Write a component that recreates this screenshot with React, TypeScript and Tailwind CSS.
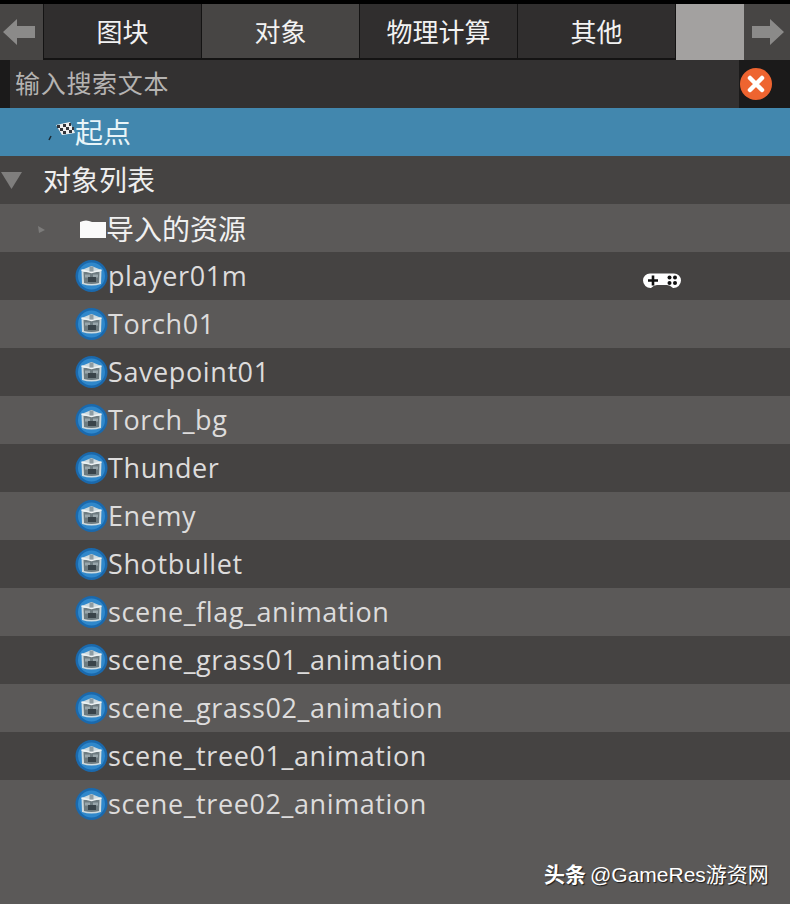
const CJK = "font-['Open_Sans','Noto_Sans_CJK_SC',sans-serif]";

const objects = [
  "player01m",
  "Torch01",
  "Savepoint01",
  "Torch_bg",
  "Thunder",
  "Enemy",
  "Shotbullet",
  "scene_flag_animation",
  "scene_grass01_animation",
  "scene_grass02_animation",
  "scene_tree01_animation",
  "scene_tree02_animation",
];

function Arrow({ flip }: { flip?: boolean }) {
  return (
    <svg width="32" height="28" viewBox="0 0 32 28" className={flip ? "rotate-180" : ""}>
      <path d="M0 14 L14 1 L14 8 L32 8 L32 20 L14 20 L14 27 Z" fill="#8b8a89" />
    </svg>
  );
}

function PackageIcon() {
  return (
    <svg width="33" height="34" viewBox="0 0 33 34" className="shrink-0">
      <circle cx="16.5" cy="17" r="16" fill="#1a69ad" />
      <circle cx="16.5" cy="17" r="13.5" fill="#3088cb" />
      <path d="M6.5 11 L16.5 7 L26.5 11 L26 25 Q16.5 28 7 25 Z" fill="#cfdbdf" />
      <path d="M8.5 13 L24.5 13 L24 24 Q16.5 26 9 24 Z" fill="#6d7b80" />
      <path d="M6.5 11 L16.5 13.5 L26.5 11" fill="none" stroke="#eef3f4" strokeWidth="1.4" />
      <path d="M10 15.5h5v3h-5z M18 15.5h5v3h-5z" fill="#98a6ab" />
      <rect x="13" y="18" width="8" height="5" fill="#39444a" />
      <rect x="14.5" y="7.5" width="4" height="5" fill="#8e9ca2" />
    </svg>
  );
}

function Tab({ label, active }: { label: string; active?: boolean }) {
  return (
    <div
      className={`flex h-[54px] w-[157px] items-center justify-center pt-0.5 text-[26px] text-[#f2f2f2] ${
        active ? "bg-[#474544]" : "bg-[#302e2e]"
      }`}
    >
      {label}
    </div>
  );
}

export default function App() {
  return (
    <div className={`relative flex h-[904px] w-[790px] flex-col overflow-hidden bg-[#5b5958] ${CJK}`}>
      <div className="h-1 bg-black" />

      {/* tabs */}
      <div className="flex h-[56px] bg-[#141313]">
        <div className="flex w-[43px] items-center justify-center bg-[#474544] pr-1.5">
          <Arrow />
        </div>
        <div className="ml-px flex gap-px">
          <Tab label="图块" />
          <Tab label="对象" active />
          <Tab label="物理计算" />
          <Tab label="其他" />
        </div>
        <div className="ml-px w-[68px] bg-[#a3a1a0]" />
        <div className="flex flex-1 items-center justify-center bg-[#474544] pl-[2px]">
          <Arrow flip />
        </div>
      </div>

      {/* search */}
      <div className="flex h-12 bg-[#1b1a1a]">
        <div className="ml-[10px] flex w-[729px] items-center bg-[#333131] pl-[5px] text-[25px] tracking-[0.7px] text-[#b5b3b1]">
          输入搜索文本
        </div>
        <div className="flex flex-1 items-center pl-px">
          <div className="flex h-8 w-8 items-center justify-center rounded-full bg-[#ee6430]">
            <svg width="18" height="18" viewBox="0 0 18 18">
              <path d="M3 3 L15 15 M15 3 L3 15" stroke="#fff" strokeWidth="4.5" strokeLinecap="round" />
            </svg>
          </div>
        </div>
      </div>

      {/* start point */}
      <div className="flex h-12 items-center bg-[#4287ae] pl-[48px] text-[28px] text-[#e8f4f8]">
        <svg width="27" height="24" viewBox="0 0 27 24" className="shrink-0">
          <path d="M1 20 L3 16" stroke="#1c2a33" strokeWidth="1.5" />
          <path d="M8 5 L22 2 L27 13 L14 15 Z" fill="#eeeeee" />
          <path d="M9 5h3v3h-3z M15 4h3v3h-3z M21 3h2v3h-2z M12 8h3v3h-3z M18 7h3v3h-3z M24 7h2v3h-2z M15 11h3v3h-3z M21 10h3v3h-3z" fill="#33343a" />
        </svg>
        起点
      </div>

      {/* group header */}
      <div className="flex h-12 items-center bg-[#454342] text-[28px] text-[#eeeeee]">
        <svg width="22" height="18" viewBox="0 0 22 18" className="ml-px shrink-0">
          <path d="M0 1 L21 1 L10.5 18 Z" fill="#7f7e7d" />
        </svg>
        <span className="ml-5">对象列表</span>
      </div>

      {/* imported folder */}
      <div className="flex h-12 items-center bg-[#5b5958] pt-0.5 text-[28px] text-[#f0f0f0]">
        <svg width="7" height="7" viewBox="0 0 7 7" className="ml-[38px] shrink-0">
          <path d="M0 0 L7 4 L1 7 Z" fill="#7c7b7a" />
        </svg>
        <svg width="26" height="20" viewBox="0 0 26 20" className="ml-[35px] shrink-0">
          <path d="M0 3 Q6 0 12 3 L26 3 L26 19 L0 19 Z" fill="#fafafa" />
        </svg>
        <span>导入的资源</span>
      </div>

      {/* object rows */}
      {objects.map((name, i) => (
        <div
          key={name}
          className={`flex h-12 shrink-0 items-center pl-[75px] text-[27px] tracking-[0.6px] text-[#dddcdc] ${
            i % 2 === 0 ? "bg-[#454342]" : "bg-[#5b5958]"
          }`}
        >
          <PackageIcon />
          <span>{name}</span>
          {i === 0 && (
            <svg width="38" height="16" viewBox="0 0 38 16" className="ml-auto mr-[109px] mt-[9px] shrink-0">
              <path d="M7 0.5 H31 A7 7 0 0 1 38 7.5 A7.5 7.5 0 0 1 30 15 Q27 12 24 12 H14 Q11 12 8 15 A7.5 7.5 0 0 1 0 7.5 A7 7 0 0 1 7 0.5 Z" fill="#fff" />
              <path d="M5 7.5h10 M10 2.5v10" stroke="#111" strokeWidth="2.6" />
              <circle cx="26.5" cy="4.5" r="2" fill="#111" />
              <circle cx="32" cy="4.5" r="2" fill="#111" />
              <circle cx="26.5" cy="10" r="2" fill="#111" />
              <circle cx="32" cy="10" r="2" fill="#111" />
            </svg>
          )}
        </div>
      ))}

      {/* watermark */}
      <div className="absolute left-[544px] top-[862px] flex gap-1 text-[21px] leading-[26px] whitespace-nowrap text-white [text-shadow:1px_1px_1px_rgba(0,0,0,0.7)] font-['Liberation_Sans','Noto_Sans_CJK_SC',sans-serif]">
        <span className="font-bold">头条</span>
        <span>@GameRes游资网</span>
      </div>
    </div>
  );
}
